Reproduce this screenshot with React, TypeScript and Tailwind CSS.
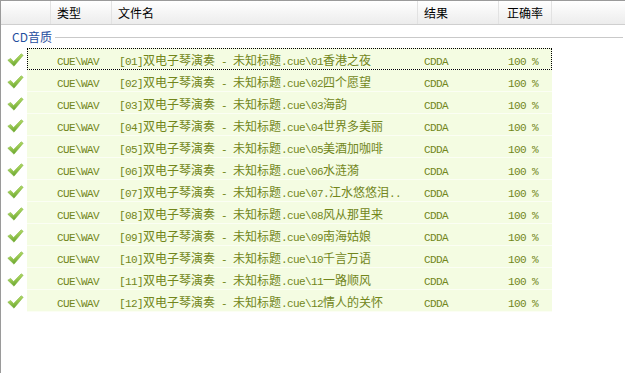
import React from 'react';

const rows = [
  '01香港之夜',
  '02四个愿望',
  '03海韵',
  '04世界多美丽',
  '05美酒加咖啡',
  '06水涟漪',
  '07.江水悠悠泪..',
  '08风从那里来',
  '09南海姑娘',
  '10千言万语',
  '11一路顺风',
  '12情人的关怀',
];

// Latin glyphs are half-width (6px), CJK full-width (12px), like SimSun
function Mixed({ text }: { text: string }) {
  const parts = text.split(/([\u3000-\u9fff]+)/).filter(Boolean);
  return (
    <>
      {parts.map((p, i) =>
        /[\u3000-\u9fff]/.test(p) ? (
          <span key={i} className="text-[12px] font-['Noto_Sans_CJK_SC',sans-serif]">
            {p}
          </span>
        ) : (
          <span key={i} className="text-[11px] tracking-[-0.6px] font-['Liberation_Mono',monospace] whitespace-pre">
            {p}
          </span>
        )
      )}
    </>
  );
}

function Check() {
  return (
    <svg width="17" height="14" viewBox="0 0 17 14">
      <defs>
        <linearGradient id="chk" x1="0" y1="0" x2="0.3" y2="1">
          <stop offset="0" stopColor="#c8e27a" />
          <stop offset="0.5" stopColor="#9ccb52" />
          <stop offset="1" stopColor="#6aa631" />
        </linearGradient>
      </defs>
      <path d="M0.8 7.2 L3.6 5.4 L6.6 8.6 L14.2 0.8 L16.2 2.2 L7 13.2 Z" fill="url(#chk)" stroke="#86b846" strokeWidth="0.6" strokeLinejoin="round" />
    </svg>
  );
}

export default function App() {
  return (
    <div className="w-[625px] h-[373px] bg-white border-l border-t border-[#9a9a9a] font-['Noto_Sans_CJK_SC',sans-serif] overflow-hidden">
      {/* header */}
      <div className="flex h-[24px] bg-gradient-to-b from-white to-[#ececec] border-b border-[#cfcfcf] text-[12px] text-black">
        <div className="w-[50px] border-r border-[#e2e2e2]" />
        <div className="w-[61px] border-r border-[#e2e2e2] pl-[6px] leading-[24px]">类型</div>
        <div className="w-[306px] border-r border-[#e2e2e2] pl-[6px] leading-[24px]">文件名</div>
        <div className="w-[81px] border-r border-[#e2e2e2] pl-[6px] leading-[24px]">结果</div>
        <div className="w-[53px] border-r border-[#e2e2e2] pl-[8px] leading-[24px]">正确率</div>
        <div className="flex-1" />
      </div>

      {/* group */}
      <div className="flex items-center h-[23px] pl-[11px] pr-[2px] gap-[3px]">
        <span className="text-[12px] text-[#1f4e9e] leading-none">CD音质</span>
        <div className="flex-1 h-px bg-[#c9c9c9] mt-[2px]" />
      </div>

      {/* rows */}
      <div className="flex flex-col">
        {rows.map((r, i) => (
          <div key={r} className="flex h-[22px]">
            <div className="w-[26px] flex items-center justify-center pl-[2px] pt-[1px]">
              <Check />
            </div>
            <div
              className={
                'w-[525px] flex items-center bg-[#f4fce2] text-[#72861a] border-b border-[#fbfef4] ' +
                (i === 0 ? 'outline outline-1 outline-dotted outline-black -outline-offset-1' : '')
              }
            >
              <div className="w-[85px] pl-[30px] leading-none">
                <Mixed text="CUE\WAV" />
              </div>
              <div className="w-[306px] pl-[7px] leading-none whitespace-nowrap">
                <Mixed text={`[${r.slice(0, 2)}]双电子琴演奏 - 未知标题.cue\\${r}`} />
              </div>
              <div className="w-[81px] pl-[6px] leading-none">
                <Mixed text="CDDA" />
              </div>
              <div className="w-[53px] pl-[9px] leading-none">
                <Mixed text="100 %" />
              </div>
            </div>
          </div>
        ))}
      </div>
    </div>
  );
}
